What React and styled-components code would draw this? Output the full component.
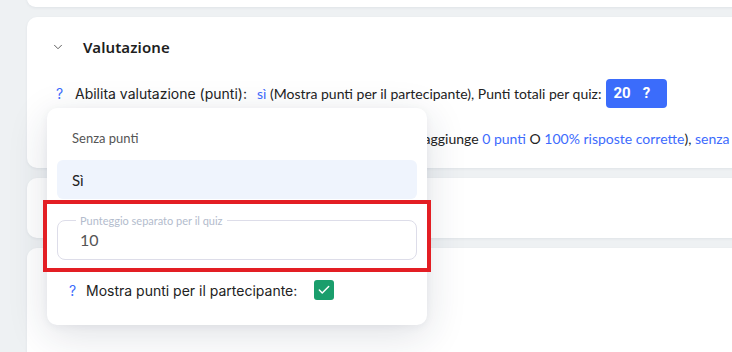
import React from "react";
import styled, { createGlobalStyle } from "styled-components";
import { ChevronDown, Check } from "lucide-react";

const GlobalStyle = createGlobalStyle`
  html, body {
    margin: 0;
    padding: 0;
    background: #eef1f3;
    font-family: "Lato", "Liberation Sans", sans-serif;
    color: #222;
    overflow: hidden;
  }
`;

const Page = styled.div`
  position: relative;
  width: 732px;
  height: 362px;
  overflow: hidden;
  display: flex;
  flex-direction: column;
  gap: 10px;
  padding-left: 27px;
  margin-top: -10px;
`;

const Card = styled.div`
  background: #fff;
  border-radius: 10px;
  width: 740px;
  min-height: ${(p) => p.$h}px;
  box-shadow: 0 1px 3px rgba(40, 60, 80, 0.07);
  flex-shrink: 0;
`;

const Section = styled(Card)`
  padding: 20px 0 15px 26px;
  box-sizing: border-box;
`;

const Header = styled.div`
  display: flex;
  align-items: center;
  height: 20px;
  gap: 18px;
  margin-left: -2px;
  color: #555;
`;

const Title = styled.h2`
  margin: 0;
  font-family: "Noto Sans", sans-serif;
  font-size: 15px;
  font-weight: 600;
  color: #1e1e1e;
  letter-spacing: 0.1px;
`;

const Body = styled.div`
  margin-top: 21px;
  display: flex;
  flex-direction: column;
  gap: 15px;
`;

const Row = styled.div`
  display: flex;
  align-items: center;
  height: 30px;
  white-space: nowrap;
  font-size: 14px;
`;

const Help = styled.span`
  color: #3d6bfd;
  font-family: "Inter", sans-serif;
  font-size: 14px;
  width: ${(p) => p.$w || 22}px;
  padding-left: ${(p) => p.$pl || 3}px;
  box-sizing: border-box;
`;

const Label = styled.span`
  font-family: "Inter", sans-serif;
  font-size: 14px;
  color: #222;
  margin-right: ${(p) => p.$mr || 10}px;
`;

const Link = styled.span`
  color: #3d6bfd;
`;

const Text = styled.span`
  color: #222;
  white-space: pre;
`;

const Badge = styled.span`
  display: inline-flex;
  align-items: center;
  gap: 12px;
  height: 29px;
  padding: 0 17px 0 7px;
  margin-left: 5px;
  border-radius: 4px;
  background: #3b6cfb;
  color: #fff;
  font-family: "Roboto", sans-serif;
  font-weight: 700;
  font-size: 15px;
`;

const Popup = styled.div`
  position: absolute;
  left: 47px;
  top: 118px;
  width: 380px;
  height: 217px;
  box-sizing: border-box;
  padding: 10px 10px 0;
  background: #fff;
  border-radius: 10px;
  box-shadow: 0 10px 40px rgba(30, 45, 70, 0.14), 0 2px 8px rgba(30, 45, 70, 0.05);
  display: flex;
  flex-direction: column;
  gap: 2px;
`;

const Option = styled.div`
  height: ${(p) => (p.$active ? 39 : 40)}px;
  display: flex;
  align-items: center;
  padding-left: 15px;
  border-radius: 6px;
  background: ${(p) => (p.$active ? "#eff4fd" : "transparent")};
  font-size: ${(p) => (p.$active ? 15 : 13)}px;
  color: ${(p) => (p.$active ? "#222" : "#555")};
`;

const Field = styled.fieldset`
  margin: 13px 0 0;
  padding: 0 0 0 18px;
  height: 46px;
  box-sizing: border-box;
  border: 1px solid #dddde9;
  border-radius: 8px;
`;

const Legend = styled.legend`
  padding: 0 4px;
  font-size: 11px;
  line-height: 13px;
  color: #b3bccd;
`;

const Input = styled.div`
  height: 30px;
  line-height: 26px;
  padding-left: 4px;
  font-size: 16px;
  color: #555;
`;

const CheckRow = styled(Row)`
  margin-top: 13px;
  padding-left: 9px;
`;

const CheckBox = styled.span`
  width: 20px;
  height: 20px;
  border-radius: 3px;
  background: #1a9e6c;
  display: inline-flex;
  align-items: center;
  justify-content: center;
  color: #fff;
`;

const Highlight = styled.div`
  position: absolute;
  left: -4px;
  top: 92px;
  width: 388px;
  height: 72px;
  box-sizing: border-box;
  border: 4px solid #e31e24;
  pointer-events: none;
`;

export default function App() {
  return (
    <>
      <GlobalStyle />
      <Page>
        <Card $h={17} />
        <Section>
          <Header>
            <ChevronDown size={14} strokeWidth={1.6} />
            <Title>Valutazione</Title>
          </Header>
          <Body>
            <Row>
              <Help>?</Help>
              <Label>Abilita valutazione (punti):</Label>
              <Link>sì</Link>
              <Text> (Mostra punti per il partecipante), Punti totali per quiz:</Text>
              <Badge>
                <span>20</span>
                <span>?</span>
              </Badge>
            </Row>
            <Row>
              <Help>?</Help>
              <Label $mr={16}>Punteggio di superamento:</Label>
              <Text>(il quiz viene superato se raggiunge </Text>
              <Link>0 punti</Link>
              <Text> O </Text>
              <Link>100% risposte corrette</Link>
              <Text>), </Text>
              <Link>senza limite</Link>
            </Row>
          </Body>
        </Section>
        <Card $h={60} />
        <Card $h={200} />
        <Popup>
          <Option>Senza punti</Option>
          <Option $active>Sì</Option>
          <Field>
            <Legend>Punteggio separato per il quiz</Legend>
            <Input>10</Input>
          </Field>
          <CheckRow>
            <Help $w={20} $pl={0}>?</Help>
            <Label $mr={17}>Mostra punti per il partecipante:</Label>
            <CheckBox>
              <Check size={14} strokeWidth={2.5} />
            </CheckBox>
          </CheckRow>
          <Highlight />
        </Popup>
      </Page>
    </>
  );
}
